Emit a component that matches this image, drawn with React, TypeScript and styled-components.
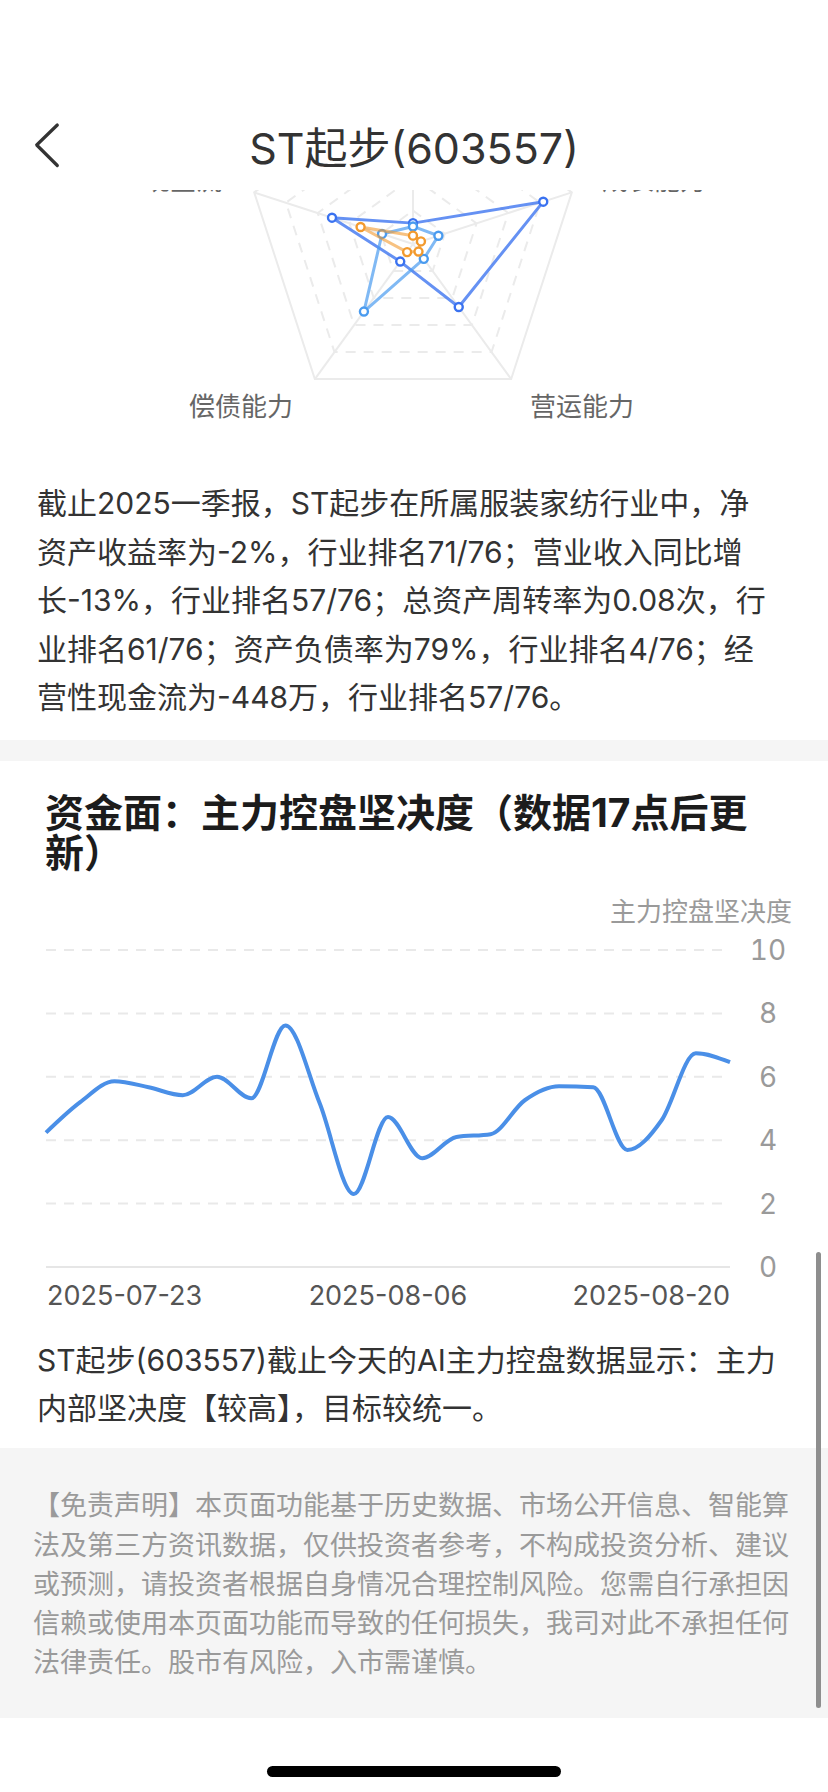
import React from 'react'
import styled, { createGlobalStyle } from 'styled-components'

const FONT = `Inter, "Noto Sans CJK SC", "Noto Sans", sans-serif`

const GlobalStyle = createGlobalStyle`
  html, body {
    margin: 0;
    padding: 0;
    background: #ffffff;
  }
  body {
    font-family: ${FONT};
    -webkit-font-smoothing: antialiased;
  }
`

// ---- radar data ----
const RADAR_CX = 413
const RADAR_CY = 244
const RADAR_R = 167
// clockwise from top: 盈利, 成长, 营运, 偿债, 现金流
const AXIS_ANGLES = [-90, -18, 54, 126, 198]

const RADAR_SERIES = [
  { color: '#3a72f0', opacity: 0.78, values: [0.125, 0.82, 0.466, 0.13, 0.51] },
  { color: '#4a9bef', opacity: 0.7, values: [0.105, 0.16, 0.11, 0.5, 0.195] },
  { color: '#f29a2e', opacity: 0.6, values: [0.05, 0.05, 0.056, 0.06, 0.33] }
]

// ---- line chart data (21 trading days, 07-23 .. 08-20) ----
const STRENGTH = [
  4.24, 5.2, 5.86, 5.67, 5.42, 6.0, 5.32, 7.62, 5.17, 2.3, 4.73, 3.43, 4.1,
  4.19, 5.26, 5.7, 5.67, 3.69, 4.63, 6.74, 6.46
]
const PLOT_LEFT = 46
const PLOT_RIGHT = 730
const PLOT_ZERO = 377
const PLOT_UNIT = 31.7

const polar = (frac: number, deg: number): [number, number] => {
  const a = (deg * Math.PI) / 180
  return [
    RADAR_CX + Math.cos(a) * RADAR_R * frac,
    RADAR_CY + Math.sin(a) * RADAR_R * frac
  ]
}

const ring = (frac: number) =>
  AXIS_ANGLES.map(deg => polar(frac, deg).join(',')).join(' ')

// monotone cubic curve through the points (same idea as d3 curveMonotoneX)
const monotonePath = (pts: [number, number][]) => {
  const n = pts.length
  const s: number[] = []
  for (let i = 0; i < n - 1; i++) {
    s[i] = (pts[i + 1][1] - pts[i][1]) / (pts[i + 1][0] - pts[i][0])
  }
  const m: number[] = []
  for (let i = 1; i < n - 1; i++) {
    const s0 = s[i - 1]
    const s1 = s[i]
    const p = (s0 + s1) / 2
    m[i] =
      (Math.sign(s0) + Math.sign(s1)) *
        Math.min(Math.abs(s0), Math.abs(s1), 0.5 * Math.abs(p)) || 0
  }
  m[0] = (3 * s[0] - m[1]) / 2
  m[n - 1] = (3 * s[n - 2] - m[n - 2]) / 2
  let d = `M${pts[0][0]},${pts[0][1]}`
  for (let i = 0; i < n - 1; i++) {
    const [x0, y0] = pts[i]
    const [x1, y1] = pts[i + 1]
    const dx = (x1 - x0) / 3
    d += ` C${x0 + dx},${y0 + dx * m[i]} ${x1 - dx},${y1 - dx * m[i + 1]} ${x1},${y1}`
  }
  return d
}

const Screen = styled.div`
  position: relative;
  width: 828px;
  height: 1792px;
  overflow: hidden;
  background: #ffffff;
  color: #333333;
`

const NavBar = styled.header`
  position: absolute;
  top: 0;
  left: 0;
  right: 0;
  z-index: 5;
  height: 190px;
  padding-top: 100px;
  box-sizing: border-box;
  background: #ffffff;
  display: grid;
  grid-template-columns: 1fr auto 1fr;
  align-items: center;
`

const BackButton = styled.button`
  justify-self: start;
  margin-left: 34px;
  padding: 0;
  border: 0;
  background: none;
  display: flex;
  width: 26px;
  height: 46px;
`

const Title = styled.h1`
  margin: 6px 0 0;
  font-size: 43px;
  font-weight: 400;
  color: #333333;
  line-height: 84px;
`

const Content = styled.main`
  display: flex;
  flex-direction: column;
`

const ChartSvg = styled.svg`
  display: block;
  flex-shrink: 0;
  font-family: ${FONT};
`

const RadarLabel = styled.text`
  font-size: 26px;
  fill: #666666;
  dominant-baseline: central;
`

const TickLabel = styled.text`
  font-size: 28px;
  fill: #9a9a9a;
  dominant-baseline: central;
  font-variant-numeric: tabular-nums;
`

const DateLabel = styled.text`
  font-size: 27px;
  fill: #555555;
  dominant-baseline: central;
`

const AxisName = styled.text`
  font-size: 26px;
  fill: #9a9a9a;
  dominant-baseline: central;
`

const Paragraph = styled.p<{ $top: number; $bottom: number; $right: number }>`
  margin: ${p => p.$top}px 0 0;
  padding: 0 ${p => p.$right}px ${p => p.$bottom}px 37px;
  font-size: 30px;
  line-height: 48.5px;
  color: #333333;
`

const Band = styled.div`
  height: 21px;
  background: #f5f5f5;
`

const SectionTitle = styled.h2`
  margin: 32.5px 0 0;
  padding: 0 45px;
  font-size: 39px;
  line-height: 40px;
  font-weight: 700;
  color: #1c1c1c;
`

const Disclaimer = styled.section`
  padding: 38.5px 33px 35.5px;
  background: #f5f5f5;
  font-size: 27px;
  line-height: 39.25px;
  color: #9a9a9a;
`

const ScrollIndicator = styled.div`
  position: absolute;
  top: 1252px;
  right: 7px;
  width: 5px;
  height: 456px;
  border-radius: 3px;
  background: #8e8e8e;
`

const HomeIndicator = styled.div`
  position: absolute;
  left: 267px;
  bottom: 15px;
  width: 294px;
  height: 11px;
  border-radius: 6px;
  background: #000000;
`

const RadarChart = () => (
  <ChartSvg width={828} height={440} viewBox="0 0 828 440">
    <g fill="none" stroke="#ebebeb" strokeWidth={2}>
      <polygon points={ring(1)} />
      {[0.8, 0.6, 0.4, 0.2].map(f => (
        <polygon key={f} points={ring(f)} strokeDasharray="10 8" />
      ))}
      {AXIS_ANGLES.map(deg => {
        const [x, y] = polar(1, deg)
        return <line key={deg} x1={RADAR_CX} y1={RADAR_CY} x2={x} y2={y} />
      })}
    </g>
    {RADAR_SERIES.map((s, si) => {
      const pts = s.values.map((v, i) => polar(v, AXIS_ANGLES[i]))
      return (
        <g key={si}>
          <polygon
            points={pts.map(p => p.join(',')).join(' ')}
            fill="none"
            stroke={s.color}
            strokeOpacity={s.opacity}
            strokeWidth={3}
            strokeLinejoin="round"
          />
          {pts.map((p, i) => (
            <circle
              key={i}
              cx={p[0]}
              cy={p[1]}
              r={4}
              fill="#ffffff"
              stroke={s.color}
              strokeWidth={2.4}
            />
          ))}
        </g>
      )
    })}
    <RadarLabel x={413} y={50} textAnchor="middle">
      盈利能力
    </RadarLabel>
    <RadarLabel x={602} y={180} textAnchor="start">
      成长能力
    </RadarLabel>
    <RadarLabel x={222} y={180} textAnchor="end">
      现金流
    </RadarLabel>
    <RadarLabel x={241} y={406} textAnchor="middle">
      偿债能力
    </RadarLabel>
    <RadarLabel x={582} y={406} textAnchor="middle">
      营运能力
    </RadarLabel>
  </ChartSvg>
)

const StrengthChart = () => {
  const step = (PLOT_RIGHT - PLOT_LEFT) / (STRENGTH.length - 1)
  const pts: [number, number][] = STRENGTH.map((v, i) => [
    PLOT_LEFT + i * step,
    PLOT_ZERO - v * PLOT_UNIT
  ])
  const ticks = [10, 8, 6, 4, 2, 0]
  return (
    <ChartSvg
      width={828}
      height={425}
      viewBox="0 0 828 425"
      style={{ marginTop: 16.5 }}>
      <AxisName x={792} y={21} textAnchor="end">
        主力控盘坚决度
      </AxisName>
      {ticks.map(t => {
        const y = PLOT_ZERO - t * PLOT_UNIT
        return (
          <g key={t}>
            <line
              x1={PLOT_LEFT}
              x2={PLOT_RIGHT}
              y1={y}
              y2={y}
              stroke={t === 0 ? '#e6e6e6' : '#e9e9e9'}
              strokeWidth={2}
              strokeDasharray={t === 0 ? undefined : '10 8'}
            />
            <TickLabel x={768} y={y} textAnchor="middle">
              {t}
            </TickLabel>
          </g>
        )
      })}
      <path
        d={monotonePath(pts)}
        fill="none"
        stroke="#4a8fe7"
        strokeWidth={4}
        strokeLinejoin="round"
      />
      <DateLabel x={47} y={405} textAnchor="start">
        2025-07-23
      </DateLabel>
      <DateLabel x={388} y={405} textAnchor="middle">
        2025-08-06
      </DateLabel>
      <DateLabel x={730} y={405} textAnchor="end">
        2025-08-20
      </DateLabel>
    </ChartSvg>
  )
}

export default function App() {
  return (
    <Screen>
      <GlobalStyle />
      <NavBar>
        <BackButton aria-label="返回">
          <svg width="26" height="46" viewBox="0 0 26 46">
            <polyline
              points="23.3,3 2.7,23 23.3,43.5"
              fill="none"
              stroke="#333333"
              strokeWidth={3.2}
              strokeLinecap="round"
              strokeLinejoin="round"
            />
          </svg>
        </BackButton>
        <Title>ST起步(603557)</Title>
      </NavBar>

      <Content>
        <RadarChart />
        <Paragraph $top={39} $bottom={18.25} $right={55}>
          截止2025一季报，ST起步在所属服装家纺行业中，净资产收益率为-2%，行业排名71/76；营业收入同比增长-13%，行业排名57/76；总资产周转率为0.08次，行业排名61/76；资产负债率为79%，行业排名4/76；经营性现金流为-448万，行业排名57/76。
        </Paragraph>
        <Band />
        <SectionTitle>资金面：主力控盘坚决度（数据17点后更新）</SectionTitle>
        <StrengthChart />
        <Paragraph $top={21} $bottom={15} $right={38}>
          ST起步(603557)截止今天的AI主力控盘数据显示：主力内部坚决度【较高】，目标较统一。
        </Paragraph>
        <Disclaimer>
          【免责声明】本页面功能基于历史数据、市场公开信息、智能算法及第三方资讯数据，仅供投资者参考，不构成投资分析、建议或预测，请投资者根据自身情况合理控制风险。您需自行承担因信赖或使用本页面功能而导致的任何损失，我司对此不承担任何法律责任。股市有风险，入市需谨慎。
        </Disclaimer>
      </Content>

      <ScrollIndicator />
      <HomeIndicator />
    </Screen>
  )
}
